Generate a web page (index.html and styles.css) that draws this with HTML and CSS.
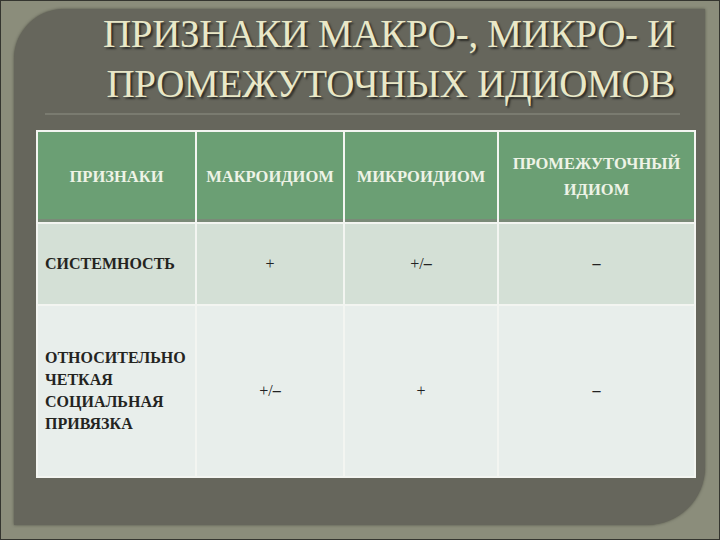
FILE: index.html
```html
<!DOCTYPE html>
<html lang="ru">
<head>
<meta charset="utf-8">
<title>Признаки макро-, микро- и промежуточных идиомов</title>
<link rel="stylesheet" href="styles.css">
</head>
<body>
<div class="slide">
  <div class="panel">
    <h1 class="title">ПРИЗНАКИ МАКРО-, МИКРО- И<br>ПРОМЕЖУТОЧНЫХ ИДИОМОВ</h1>
    <div class="rule"></div>
    <table class="grid">
      <colgroup>
        <col class="c1"><col class="c2"><col class="c3"><col class="c4">
      </colgroup>
      <tr class="head">
        <th>ПРИЗНАКИ</th>
        <th>МАКРОИДИОМ</th>
        <th>МИКРОИДИОМ</th>
        <th>ПРОМЕЖУТОЧНЫЙ<br>ИДИОМ</th>
      </tr>
      <tr class="odd">
        <td class="label">СИСТЕМНОСТЬ</td>
        <td class="val">+</td>
        <td class="val">+/<b>–</b></td>
        <td class="val strong">–</td>
      </tr>
      <tr class="even">
        <td class="label">ОТНОСИТЕЛЬНО ЧЕТКАЯ СОЦИАЛЬНАЯ ПРИВЯЗКА</td>
        <td class="val">+/<b>–</b></td>
        <td class="val">+</td>
        <td class="val strong">–</td>
      </tr>
    </table>
  </div>
</div>
</body>
</html>
```
FILE: styles.css
```css
html, body {
  margin: 0;
  padding: 0;
}
body {
  width: 720px;
  height: 540px;
  overflow: hidden;
  font-family: "Liberation Serif", "DejaVu Serif", serif;
}
.slide {
  box-sizing: border-box;
  width: 720px;
  height: 540px;
  background: #8b8d7b;
  border: 1px solid #34352f;
  padding: 11px 14px 11px 13px;
}
.panel {
  box-sizing: border-box;
  height: 100%;
  background: #66665c;
  border-radius: 50px 0 58px 0;
  box-shadow: 0 0 3px rgba(40, 40, 35, 0.6);
  padding: 0 11px 0 22px;
}
.title {
  margin: -3px 19px 0 0;
  font-weight: normal;
  font-size: 39px;
  line-height: 50px;
  text-align: right;
  color: #e9e8c8;
  text-shadow: 2px 2px 2px #2d2d28;
  letter-spacing: -0.3px;
}
.rule {
  height: 2px;
  background: #7a7b70;
  margin: 4px 14px 0 9px;
}
.grid {
  margin-top: 15px;
  border-collapse: collapse;
  table-layout: fixed;
  width: 658px;
  border: 2px solid #f3f5f1;
}
.c1 { width: 159px; }
.c2 { width: 148px; }
.c3 { width: 154px; }
.c4 { width: 197px; }
.grid th, .grid td {
  border: 2px solid #f3f5f1;
  padding: 0 7px;
  font-size: 16px;
  line-height: 22px;
}
.head th {
  height: 90px;
  background: #6b9f74;
  color: #eef3e6;
  font-weight: bold;
  font-size: 16.5px;
  text-align: center;
  line-height: 26px;
  box-shadow: inset 0 -3px 0 #7a8a78;
}
.odd td {
  height: 80px;
  background: #d4e0d6;
}
.even td {
  height: 170px;
  background: #e8eeeb;
}
.label {
  font-weight: bold;
  color: #24241f;
  text-align: left;
}
.val {
  text-align: center;
  color: #222;
  font-size: 17px;
}
.val b, .strong {
  font-weight: bold;
}
```
